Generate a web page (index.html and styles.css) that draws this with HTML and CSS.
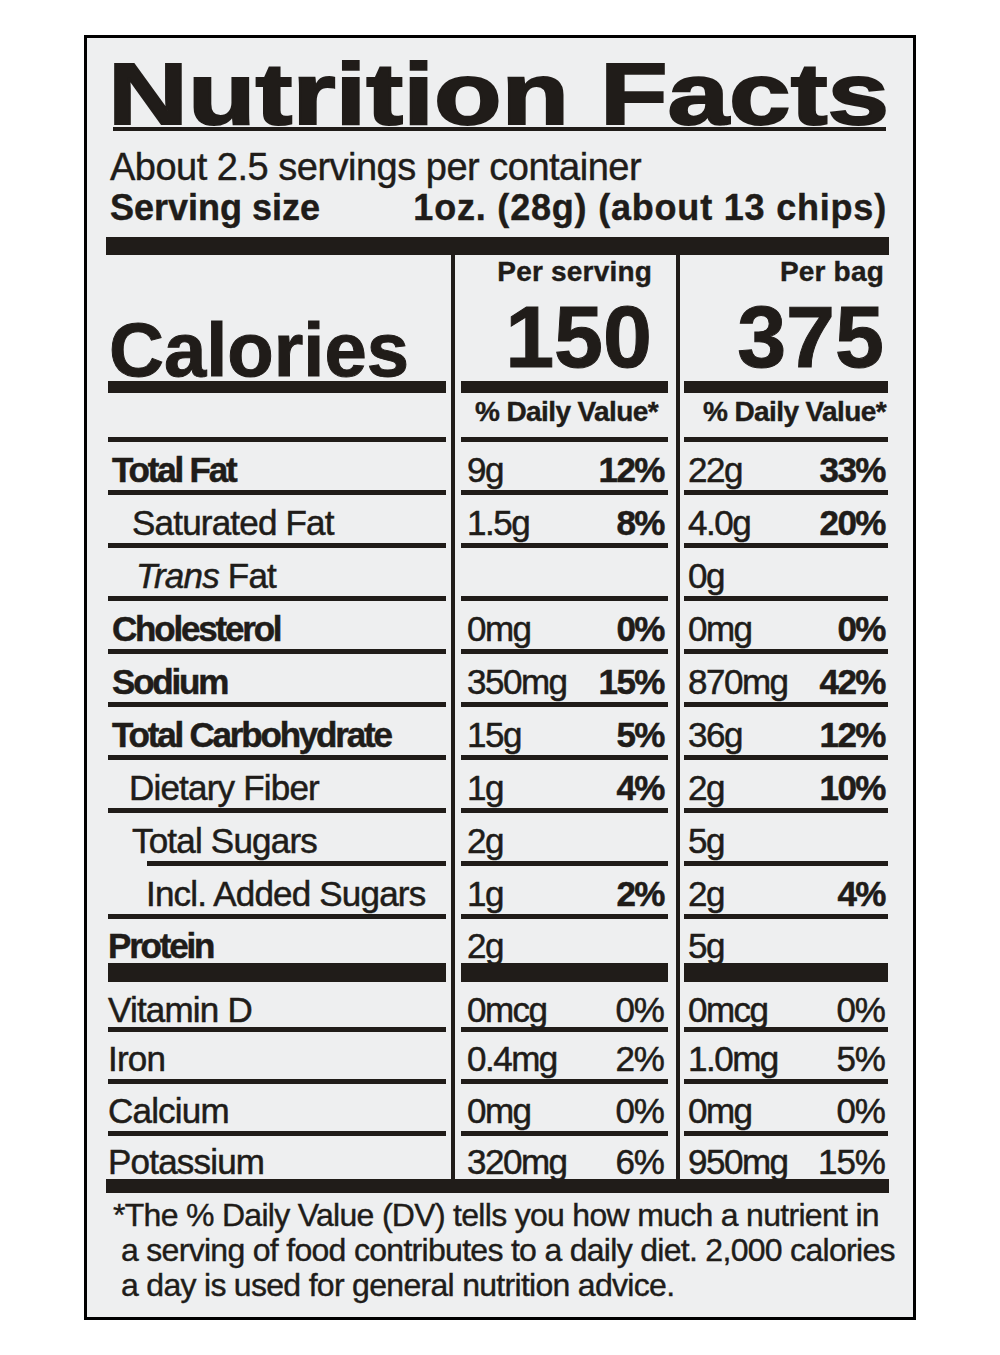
FILE: index.html
```html
<!DOCTYPE html>
<html lang="en">
<head>
<meta charset="utf-8">
<title>Nutrition Facts</title>
<link rel="stylesheet" href="styles.css">
</head>
<body>
<div class="frame">
  <section class="label">
    <h1 class="title"><span>Nutrition Facts</span></h1>
    <div class="servings">About 2.5 servings per container</div>
    <div class="size"><span>Serving size</span><span class="size-val">1oz. (28g) (about 13 chips)</span></div>

    <div class="grid">
      <!-- calories -->
      <div class="c1"><div class="in cal"><span class="calories">Calories</span></div></div>
      <div class="c2"><div class="in cal col"><span class="per">Per serving</span><span class="kcal">150</span></div></div>
      <div class="c3"><div class="in cal col"><span class="per">Per bag</span><span class="kcal">375</span></div></div>

      <!-- daily value header -->
      <div class="c1"><div class="in dv"></div></div>
      <div class="c2"><div class="in dv"><span class="dvt">% Daily Value*</span></div></div>
      <div class="c3"><div class="in dv"><span class="dvt">% Daily Value*</span></div></div>

      <div class="c1"><div class="in"><span class="lab b i0">Total Fat</span></div></div>
      <div class="c2"><div class="in"><span class="v">9g</span><span class="p">12%</span></div></div>
      <div class="c3"><div class="in"><span class="v">22g</span><span class="p">33%</span></div></div>

      <div class="c1"><div class="in"><span class="lab i1">Saturated Fat</span></div></div>
      <div class="c2"><div class="in"><span class="v">1.5g</span><span class="p">8%</span></div></div>
      <div class="c3"><div class="in"><span class="v">4.0g</span><span class="p">20%</span></div></div>

      <div class="c1"><div class="in"><span class="lab i1t"><i>Trans</i> Fat</span></div></div>
      <div class="c2"><div class="in"></div></div>
      <div class="c3"><div class="in"><span class="v">0g</span></div></div>

      <div class="c1"><div class="in"><span class="lab b i0">Cholesterol</span></div></div>
      <div class="c2"><div class="in"><span class="v">0mg</span><span class="p">0%</span></div></div>
      <div class="c3"><div class="in"><span class="v">0mg</span><span class="p">0%</span></div></div>

      <div class="c1"><div class="in"><span class="lab b i0">Sodium</span></div></div>
      <div class="c2"><div class="in"><span class="v">350mg</span><span class="p">15%</span></div></div>
      <div class="c3"><div class="in"><span class="v">870mg</span><span class="p">42%</span></div></div>

      <div class="c1"><div class="in"><span class="lab b i0">Total Carbohydrate</span></div></div>
      <div class="c2"><div class="in"><span class="v">15g</span><span class="p">5%</span></div></div>
      <div class="c3"><div class="in"><span class="v">36g</span><span class="p">12%</span></div></div>

      <div class="c1"><div class="in"><span class="lab i1d">Dietary Fiber</span></div></div>
      <div class="c2"><div class="in"><span class="v">1g</span><span class="p">4%</span></div></div>
      <div class="c3"><div class="in"><span class="v">2g</span><span class="p">10%</span></div></div>

      <div class="c1"><div class="in sugars"><span class="lab i1">Total Sugars</span></div></div>
      <div class="c2"><div class="in"><span class="v">2g</span></div></div>
      <div class="c3"><div class="in"><span class="v">5g</span></div></div>

      <div class="c1"><div class="in"><span class="lab i2">Incl. Added Sugars</span></div></div>
      <div class="c2"><div class="in"><span class="v">1g</span><span class="p">2%</span></div></div>
      <div class="c3"><div class="in"><span class="v">2g</span><span class="p">4%</span></div></div>

      <div class="c1"><div class="in prot"><span class="lab b iv">Protein</span></div></div>
      <div class="c2"><div class="in prot"><span class="v">2g</span></div></div>
      <div class="c3"><div class="in prot"><span class="v">5g</span></div></div>

      <div class="c1"><div class="in vitd"><span class="lab iv">Vitamin D</span></div></div>
      <div class="c2"><div class="in vitd"><span class="v">0mcg</span><span class="p r">0%</span></div></div>
      <div class="c3"><div class="in vitd"><span class="v">0mcg</span><span class="p r">0%</span></div></div>

      <div class="c1"><div class="in vit"><span class="lab iv">Iron</span></div></div>
      <div class="c2"><div class="in vit"><span class="v">0.4mg</span><span class="p r">2%</span></div></div>
      <div class="c3"><div class="in vit"><span class="v">1.0mg</span><span class="p r">5%</span></div></div>

      <div class="c1"><div class="in vit"><span class="lab iv">Calcium</span></div></div>
      <div class="c2"><div class="in vit"><span class="v">0mg</span><span class="p r">0%</span></div></div>
      <div class="c3"><div class="in vit"><span class="v">0mg</span><span class="p r">0%</span></div></div>

      <div class="c1"><div class="in last"><span class="lab iv">Potassium</span></div></div>
      <div class="c2"><div class="in last"><span class="v">320mg</span><span class="p r">6%</span></div></div>
      <div class="c3"><div class="in last"><span class="v">950mg</span><span class="p r">15%</span></div></div>
    </div>

    <p class="foot">*The % Daily Value (DV) tells you how much a nutrient in<br>a serving of food contributes to a daily diet. 2,000 calories<br>a day is used for general nutrition advice.</p>
  </section>
</div>
</body>
</html>
```

FILE: styles.css
```css
* { box-sizing: border-box; }

html, body {
  margin: 0;
  padding: 0;
  background: #ffffff;
}

body {
  font-family: "Liberation Sans", Arial, sans-serif;
  color: #201c19;
}

.frame {
  width: 832px;
  height: 1285px;
  margin: 35px 0 0 84px;
  border: 3px solid #000;
  background: #eeeff0;
  padding: 22.5px 24px 0 19px;
}

.label {
  width: 783px;
}

/* ---------- header ---------- */
.title {
  margin: 0 3px 0 7px;
  font-size: 88px;
  line-height: 66px;
  font-weight: 700;
  border-bottom: 4px solid #201c19;
  white-space: nowrap;
}

.title span {
  display: inline-block;
  margin-left: -5px;
  transform: scaleX(1.258);
  transform-origin: 0 50%;
  -webkit-text-stroke: 2px #201c19;
}

.servings {
  margin-top: 15.3px;
  padding-left: 4px;
  font-size: 38px;
  line-height: 42px;
  letter-spacing: -0.5px;
  -webkit-text-stroke: 0.4px #201c19;
  white-space: nowrap;
}

.size {
  display: flex;
  justify-content: space-between;
  padding: 0 2px 0 4px;
  font-size: 36px;
  line-height: 40px;
  font-weight: 700;
  -webkit-text-stroke: 0.4px #201c19;
  white-space: nowrap;
}

.size-val {
  letter-spacing: 0.8px;
}

/* ---------- table ---------- */
.grid {
  display: grid;
  grid-template-columns: 345px 225px 213px;
  margin-top: 9.5px;
  border-top: 18px solid #201c19;
  border-bottom: 14px solid #201c19;
}

.c1 { padding: 0 5px 0 2px; }
.c2 { border-left: 4px solid #201c19; padding: 0 8px 0 6px; }
.c3 { border-left: 4px solid #201c19; padding: 0 1px 0 4px; }

.in {
  display: flex;
  justify-content: space-between;
  align-items: flex-end;
  height: 53px;
  padding-bottom: 3px;
  border-bottom: 5px solid #201c19;
  font-size: 35px;
  line-height: 35px;
  white-space: nowrap;
}

.in.cal {
  height: 138px;
  padding-bottom: 0;
  border-bottom-width: 12px;
}

.in.col {
  flex-direction: column;
  justify-content: space-between;
  align-items: flex-end;
  padding: 2px 16px 4px 0;
}

.c3 .in.col { padding-right: 4px; }

.calories {
  font-size: 76px;
  line-height: 62px;
  font-weight: 700;
  padding-left: 1px;
  -webkit-text-stroke: 1px #201c19;
}

.per {
  font-size: 28px;
  line-height: 30px;
  font-weight: 700;
  letter-spacing: 0.2px;
  -webkit-text-stroke: 0.4px #201c19;
}

.kcal {
  font-size: 88px;
  line-height: 80px;
  font-weight: 700;
  -webkit-text-stroke: 1px #201c19;
}

.in.dv {
  height: 49px;
  padding: 0;
  align-items: flex-start;
  justify-content: flex-end;
}

.c2 .in.dv { padding-right: 10px; }
.c3 .in.dv { padding-right: 2px; }

.dvt {
  font-size: 28px;
  line-height: 38px;
  font-weight: 700;
  letter-spacing: -0.6px;
  -webkit-text-stroke: 0.4px #201c19;
}

.in.sugars {
  border-bottom: 0;
  padding-bottom: 8px;
  background: linear-gradient(#201c19, #201c19) 39px 100% / calc(100% - 39px) 5px no-repeat;
}

.in.prot {
  height: 63px;
  padding-bottom: 0;
  border-bottom-width: 19px;
}

.in.vitd {
  height: 50px;
  padding-bottom: 0;
}

.in.vit {
  height: 52px;
}

.in.last {
  height: 43px;
  padding-bottom: 0;
  border-bottom: 0;
}

/* labels */
.lab {
  letter-spacing: -0.8px;
  -webkit-text-stroke: 0.5px #201c19;
}

.lab.b {
  font-weight: 700;
  letter-spacing: -2.2px;
}

.lab i { font-style: italic; }

.i0 { padding-left: 4px; }
.i1 { padding-left: 24px; }
.i1t { padding-left: 28px; }
.i1d { padding-left: 21px; }
.i2 { padding-left: 38px; }
.iv { padding-left: 0; }

/* values */
.v {
  padding-left: 6px;
  letter-spacing: -1.5px;
  -webkit-text-stroke: 0.5px #201c19;
}

.c3 .v { padding-left: 4px; }

.p {
  padding-right: 4px;
  font-weight: 700;
  letter-spacing: -1.5px;
  -webkit-text-stroke: 0.5px #201c19;
}

.c3 .p { padding-right: 3px; }

.p.r { font-weight: 400; letter-spacing: -1px; }

/* footnote */
.foot {
  margin: 4.4px 0 0 0;
  padding-left: 15px;
  text-indent: -8px;
  font-size: 32px;
  line-height: 35px;
  letter-spacing: -0.7px;
  white-space: nowrap;
  -webkit-text-stroke: 0.4px #201c19;
}
```
